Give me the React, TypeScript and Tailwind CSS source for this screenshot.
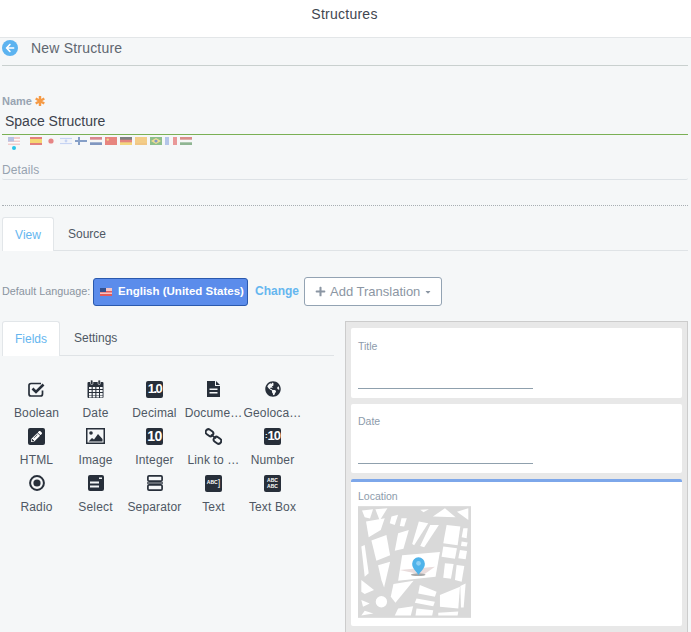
import React from 'react';
import { FaArrowLeft, FaPlus, FaCaretDown, FaGlobeAmericas, FaPencilAlt } from 'react-icons/fa';

const Flag = ({ children }: { children: React.ReactNode }) => (
  <svg width="12" height="8" viewBox="0 0 12 8" className="opacity-60 shrink-0">
    {children}
  </svg>
);

const flags = [
  <><rect width="12" height="8" fill="#f3b0b0" /><rect y="2" width="12" height="1.5" fill="#fff" /><rect y="5" width="12" height="1.5" fill="#fff" /><rect width="6" height="4.5" fill="#8f9fd8" /></>,
  <><rect width="12" height="8" fill="#d8322c" /><rect y="2" width="12" height="4" fill="#f6c21c" /></>,
  <><rect width="12" height="8" fill="#f6f6f6" /><circle cx="6" cy="4" r="2.6" fill="#dd3a3a" /></>,
  <><rect width="12" height="8" fill="#eef2fb" /><rect y="1" width="12" height="1" fill="#a8bdf0" /><rect y="6" width="12" height="1" fill="#a8bdf0" /><circle cx="6" cy="4" r="1.4" fill="#a8bdf0" /></>,
  <><rect width="12" height="8" fill="#f4f6fa" /><rect y="3" width="12" height="2" fill="#3c66a8" /><rect x="3" width="2" height="8" fill="#3c66a8" /></>,
  <><rect width="12" height="8" fill="#f6f6f6" /><rect width="12" height="2.7" fill="#c8404a" /><rect y="5.3" width="12" height="2.7" fill="#34589c" /></>,
  <><rect width="12" height="8" fill="#de3a30" /><circle cx="2.8" cy="2.6" r="1.2" fill="#f2c040" /></>,
  <><rect width="12" height="8" fill="#d83a30" /><rect width="12" height="2.7" fill="#333" /><rect y="5.3" width="12" height="2.7" fill="#f2c230" /></>,
  <><rect width="12" height="8" fill="#f3b23e" /><rect y="6" width="12" height="2" fill="#eea63a" /></>,
  <><rect width="12" height="8" fill="#4c9a46" /><path d="M6 1 11 4 6 7 1 4Z" fill="#f0d050" /><circle cx="6" cy="4" r="1.6" fill="#3a5ea8" /></>,
  <><rect width="4" height="8" fill="#8aa4e0" /><rect x="4" width="4" height="8" fill="#f6f6f6" /><rect x="8" width="4" height="8" fill="#e25a5a" /></>,
  <><rect width="12" height="8" fill="#f6f6f6" /><rect width="12" height="2.7" fill="#c84a40" /><rect y="5.3" width="12" height="2.7" fill="#4c8a50" /></>,
];

const iconBox = 'w-[17px] h-[17px] rounded-[2px] bg-[#272f3a] text-white flex items-center justify-center overflow-hidden';

const icons: Record<string, React.ReactNode> = {
  Boolean: (
    <svg width="17" height="17" viewBox="0 0 17 17" fill="none" stroke="#272f3a">
      <path d="M14.5 9.5V13a2 2 0 0 1-2 2H3a2 2 0 0 1-2-2V4.5a2 2 0 0 1 2-2H13" strokeWidth="1.7" />
      <path d="M4.5 7.5 8 11 15.5 3.5" strokeWidth="2.6" />
    </svg>
  ),
  Date: (
    <svg width="17" height="18" viewBox="0 0 17 18">
      <rect x="0.5" y="2" width="16" height="16" rx="1" fill="#272f3a" />
      <g fill="#f5f7f8">
        {[2, 5.7, 9.4, 13].map((x) => [7, 10, 13, 15.5].map((y) => <rect key={`${x}-${y}`} x={x} y={y} width="2.6" height="2" />))}
      </g>
      <rect x="3.5" y="0" width="2.4" height="4.5" rx="1" fill="#272f3a" stroke="#f5f7f8" strokeWidth="0.6" />
      <rect x="11" y="0" width="2.4" height="4.5" rx="1" fill="#272f3a" stroke="#f5f7f8" strokeWidth="0.6" />
    </svg>
  ),
  Decimal: <div className={`${iconBox} text-[13px] font-bold tracking-[-1.5px]`}>1.0</div>,
  Document: (
    <svg width="13" height="16" viewBox="0 0 13 16">
      <path d="M0 0H8V5H13V16H0Z" fill="#272f3a" />
      <path d="M9 0 13 4H9Z" fill="#272f3a" />
      <rect x="2.5" y="7.5" width="8" height="1.5" fill="#f5f7f8" />
      <rect x="2.5" y="11" width="8" height="1.5" fill="#f5f7f8" />
    </svg>
  ),
  Geo: <FaGlobeAmericas className="w-[16px] h-[16px] text-[#272f3a]" />,
  HTML: <div className={iconBox}><FaPencilAlt className="w-[11px] h-[11px]" /></div>,
  Image: (
    <svg width="19" height="16" viewBox="0 0 19 16">
      <rect x="0.75" y="0.75" width="17.5" height="14.5" fill="none" stroke="#272f3a" strokeWidth="1.5" />
      <circle cx="5" cy="5" r="1.8" fill="#272f3a" />
      <path d="M2.5 13.5 6 10 8 11.5 12 6 16.5 11V13.5Z" fill="#272f3a" />
    </svg>
  ),
  Integer: <div className={`${iconBox} text-[14px] font-bold tracking-[-0.5px]`}>10</div>,
  Link: (
    <svg width="17" height="17" viewBox="0 0 17 17" fill="none" stroke="#272f3a" strokeWidth="2">
      <rect x="0.5" y="2" width="8" height="5.5" rx="2.7" transform="rotate(35 4.5 4.7)" />
      <rect x="8.5" y="9.5" width="8" height="5.5" rx="2.7" transform="rotate(35 12.5 12.2)" />
      <path d="M6 6.5 11 10.5" strokeWidth="1.6" />
    </svg>
  ),
  Number: <div className={`${iconBox} text-[13px] font-bold tracking-[-1px]`}><span className="text-[8px] mr-[1px]">:</span>10</div>,
  Radio: (
    <svg width="16" height="16" viewBox="0 0 16 16">
      <circle cx="8" cy="8" r="6.9" fill="none" stroke="#272f3a" strokeWidth="2" />
      <circle cx="8" cy="8" r="3.6" fill="#272f3a" />
    </svg>
  ),
  Select: (
    <svg width="16" height="16" viewBox="0 0 16 16">
      <rect width="16" height="16" rx="2" fill="#272f3a" />
      <rect x="2" y="6.5" width="9" height="2" fill="#f5f7f8" />
      <rect x="2" y="10.5" width="9" height="2" fill="#f5f7f8" />
      <rect x="11" y="2.5" width="3" height="1.5" fill="#f5f7f8" />
    </svg>
  ),
  Separator: (
    <svg width="16" height="16" viewBox="0 0 16 16" fill="none" stroke="#272f3a" strokeWidth="1.7">
      <rect x="0.9" y="0.9" width="14.2" height="5.2" rx="1.2" />
      <rect x="0.9" y="9.9" width="14.2" height="5.2" rx="1.2" />
      <path d="M0 8H16" strokeWidth="1.4" />
    </svg>
  ),
  Text: <div className={`${iconBox} text-[5px] font-bold`}>ABC<span className="text-[9px] font-normal leading-none">]</span></div>,
  TextBox: (
    <div className={`${iconBox} flex-col text-[5px] font-bold leading-[6px]`}>
      <span>ABC</span>
      <span>ABC</span>
    </div>
  ),
};

const fields = [
  { label: 'Boolean', icon: 'Boolean' },
  { label: 'Date', icon: 'Date' },
  { label: 'Decimal', icon: 'Decimal' },
  { label: 'Docume…', icon: 'Document' },
  { label: 'Geoloca…', icon: 'Geo' },
  { label: 'HTML', icon: 'HTML' },
  { label: 'Image', icon: 'Image' },
  { label: 'Integer', icon: 'Integer' },
  { label: 'Link to …', icon: 'Link' },
  { label: 'Number', icon: 'Number' },
  { label: 'Radio', icon: 'Radio' },
  { label: 'Select', icon: 'Select' },
  { label: 'Separator', icon: 'Separator' },
  { label: 'Text', icon: 'Text' },
  { label: 'Text Box', icon: 'TextBox' },
];

// white city blocks, in the coordinates of a 3x crop of the thumbnail
const blocks = [
  '52,92 85,88 76,116 60,112',
  '92,88 128,85 105,122',
  '140,110 160,105 150,135 135,130',
  '170,115 186,115 178,140 165,138',
  '64,125 120,115 108,150 72,172',
  '222,125 250,130 208,196 202,192',
  '256,135 282,135 238,202 226,198',
  '305,135 346,140 338,196 295,190',
  '355,145 368,145 365,175 350,172',
  '350,185 368,188 365,200 348,198',
  '226,90 252,88 236,97',
  '264,110 300,85 332,112',
  '336,96 370,85 370,120',
  '80,182 125,165 136,226 95,242',
  '50,200 60,195 72,280 60,290',
  '160,160 192,150 176,206 150,212',
  '295,200 336,205 330,236 290,230',
  '345,210 366,213 362,238 340,235',
  '100,256 136,245 118,322 110,300',
  '172,226 285,216 272,290 160,302',
  '300,250 326,252 318,296 295,293',
  '335,255 358,258 350,305 330,300',
  '146,312 206,302 152,368 138,350',
  '225,315 275,335 270,350 220,340',
  '215,355 270,365 265,378 210,368',
  '285,345 345,320 340,385 285,380',
  '160,385 205,378 198,406 150,406',
  '215,385 265,390 262,406 212,406',
  '280,398 340,394 338,406 280,406',
  '50,360 75,370 55,380',
  '60,392 86,400 50,406',
  '50,300 88,330 60,342 50,335',
  '346,318 362,310 356,382 348,382',
];

const MapThumb = () => (
  <svg width="113" height="112" viewBox="40 79 338 334" className="block">
    <rect x="40" y="79" width="338" height="334" fill="#d9d9d9" />
    <g fill="#fff">
      {blocks.map((b) => <polygon key={b} points={b} />)}
      <circle cx="110" cy="365" r="17" />
    </g>
    <path d="M165 270 270 260 235 285Z" fill="#e9dcdc" />
    <ellipse cx="220" cy="284" rx="22" ry="4" fill="#a9a9a9" />
    <path d="M221 285c-4-10-19-18-19-34a19 19 0 0 1 38 0c0 16-15 24-19 34Z" fill="#4fb3ea" />
    <circle cx="221" cy="250" r="7" fill="#8fd0f4" />
  </svg>
);

export default function App() {
  return (
    <div className="w-[691px] h-[632px] overflow-hidden bg-[#f5f7f8] font-['Liberation_Sans',Arial,sans-serif] text-[#4b5563]">
      <header className="h-[38px] bg-white border-b border-[#e3e6e8] pt-[6px] pr-[2px] text-center text-[14px] leading-[16px] tracking-[0.25px] text-[#3f4650]">
        Structures
      </header>

      <div className="pl-[2px] pr-[3px]">
        <div className="h-[28px] flex items-center border-b border-[#c9d0cf]">
          <div className="w-[16px] h-[16px] mb-[8px] rounded-full bg-[#5cb3f0] text-white flex items-center justify-center">
            <FaArrowLeft className="w-[10px] h-[10px]" />
          </div>
          <span className="ml-[13px] mb-[8px] text-[14px] leading-[16px] tracking-[0.2px] text-[#5f6670]">New Structure</span>
        </div>

        <div className="mt-[28px] flex items-center h-[14px] text-[11px] font-bold text-[#98a4b2]">
          Name
          <span className="ml-[3px] w-[10px] h-[10px] text-[#f59a45]">
            <svg viewBox="0 0 10 10" width="10" height="10" stroke="currentColor" strokeWidth="2.4">
              <path d="M5 0V10M.7 2.5 9.3 7.5M.7 7.5 9.3 2.5" />
            </svg>
          </span>
        </div>
        <div className="h-[27px] pl-[3px] pt-[5px] border-b border-[#7ab055] text-[14px] leading-[16px] text-[#3c424c]">
          Space Structure
        </div>
        <div className="mt-[1px] h-[14px] flex items-start pl-[6px]">
          {flags.map((f, i) => (
            <div key={i} className={`relative mt-px ${i === 0 ? 'mr-[10px]' : 'mr-[3px]'}`}>
              <Flag>{f}</Flag>
              {i === 0 && <span className="absolute left-[4px] top-[9px] w-[4px] h-[4px] rounded-full bg-[#2cc3e8]" />}
            </div>
          ))}
        </div>
        <div className="mt-[10px] h-[20px] border-b border-[#dde2e6] rounded-b-[2px] text-[12px] leading-[21px] tracking-[0.1px] text-[#97a3b0]">
          Details
        </div>
        <div className="mt-[25px] border-t border-dotted border-[#a8aeb3]" />

        <div className="mt-[11px] flex h-[34px] border-b border-[#dfe3e6]">
          <div className="w-[52px] h-[34px] bg-white border border-b-0 border-[#e2e6e9] rounded-t-[3px] flex items-center justify-center text-[12px] text-[#65b6ef]">
            View
          </div>
          <div className="ml-[14px] h-[33px] flex items-center text-[12px] text-[#4f5864]">Source</div>
        </div>

        <div className="mt-[26px] flex items-center h-[29px]">
          <span className="text-[10.8px] font-medium text-[#8a949f] w-[91px] whitespace-nowrap">Default Language:</span>
          <div className="w-[155px] h-[28px] rounded-[3px] bg-[#5b8ceb] border border-[#2a59ad] flex items-center pl-[6px] text-[11.5px] font-bold text-white whitespace-nowrap">
            <svg width="12" height="8" viewBox="0 0 12 8" className="mr-[6px] shrink-0">
              <rect width="12" height="8" fill="#f4c4c4" />
              <rect y="3" width="12" height="1.5" fill="#e25a5a" />
              <rect y="6" width="12" height="2" fill="#e25a5a" />
              <rect width="6" height="4" fill="#33508f" />
            </svg>
            English (United States)
          </div>
          <span className="ml-[7px] mb-[2px] text-[12px] font-bold text-[#65b6ef]">Change</span>
          <div className="ml-[5px] w-[138px] h-[29px] rounded-[3px] bg-white border border-[#93a3b3] flex items-center pl-[10px] text-[13px] text-[#8b96a3] whitespace-nowrap">
            <FaPlus className="w-[11px] h-[11px] mr-[4px]" />
            Add Translation
            <FaCaretDown className="w-[8px] h-[8px] ml-[4px]" />
          </div>
        </div>

        <div className="mt-[15px] flex items-start">
          <div className="w-[332px]">
            <div className="flex h-[35px] border-b border-[#dfe3e6]">
              <div className="w-[58px] h-[35px] bg-white border border-b-0 border-[#e2e6e9] rounded-t-[3px] flex items-center justify-center text-[12px] text-[#65b6ef]">
                Fields
              </div>
              <div className="ml-[14px] h-[34px] flex items-center text-[12px] text-[#4f5864]">Settings</div>
            </div>
            <div className="mt-[23px] ml-[5px] grid grid-cols-[repeat(5,59px)] auto-rows-[47px]">
              {fields.map((f) => (
                <div key={f.label} className="flex flex-col items-center min-w-0">
                  <div className="h-[20px] flex items-center justify-center">{icons[f.icon]}</div>
                  <div className="mt-[7px] w-full text-center whitespace-nowrap text-[12px] leading-[14px] tracking-[0.15px] text-[#4f5864]">
                    {f.label}
                  </div>
                </div>
              ))}
            </div>
          </div>

          <div className="ml-[11px] w-[343px] h-[320px] bg-[#e8e8e8] border border-[#cccccc] px-[5px] pt-[6px] flex flex-col gap-[6px]">
            <div className="h-[70px] bg-white rounded-[2px] px-[7px] pt-[11px] shrink-0">
              <div className="text-[10.5px] leading-[14px] text-[#8d9bab]">Title</div>
              <div className="mt-[35px] w-[175px] border-b border-[#8fa0ad]" />
            </div>
            <div className="h-[69px] bg-white rounded-[2px] px-[7px] pt-[10px] shrink-0">
              <div className="text-[10.5px] leading-[14px] text-[#8d9bab]">Date</div>
              <div className="mt-[35px] w-[175px] border-b border-[#8fa0ad]" />
            </div>
            <div className="h-[147px] shrink-0 bg-white rounded-[2px] border-t-[3px] border-[#7da7ea] px-[7px] pt-[7px]">
              <div className="text-[10.5px] leading-[14px] text-[#8d9bab]">Location</div>
              <div className="mt-[3px]"><MapThumb /></div>
            </div>
          </div>
        </div>
      </div>
    </div>
  );
}
